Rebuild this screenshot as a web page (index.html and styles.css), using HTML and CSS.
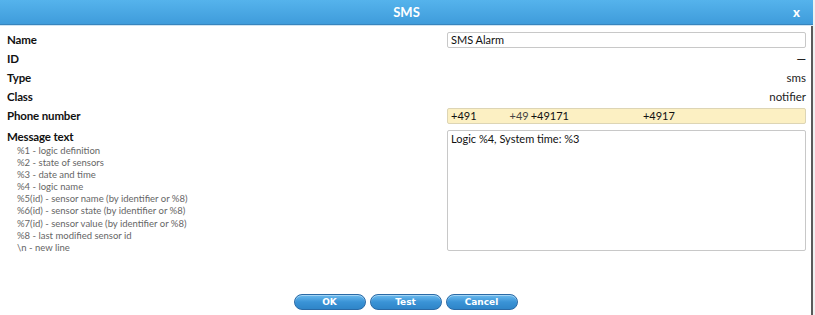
FILE: index.html
```html
<!DOCTYPE html>
<html>
<head>
<meta charset="utf-8">
<link rel="stylesheet" href="styles.css">
</head>
<body>
<div class="dialog">
  <div class="titlebar">
    <span class="title">SMS</span>
    <span class="close">x</span>
  </div>
  <div class="content">
    <div class="form">
      <div class="row">
        <div class="label">Name</div>
        <div class="field"><input class="input" type="text" value="SMS Alarm"></div>
      </div>
      <div class="row">
        <div class="label">ID</div>
        <div class="value dash">—</div>
      </div>
      <div class="row">
        <div class="label">Type</div>
        <div class="value">sms</div>
      </div>
      <div class="row">
        <div class="label">Class</div>
        <div class="value">notifier</div>
      </div>
      <div class="row">
        <div class="label">Phone number</div>
        <div class="field"><div class="input phone"><span>+491</span><span class="p2">+49</span><span class="p3">+49171</span><span class="p4">+4917</span></div></div>
      </div>
      <div class="row msg">
        <div class="left">
          <div class="label">Message text</div>
          <ul class="help">
            <li>%1 - logic definition</li>
            <li>%2 - state of sensors</li>
            <li>%3 - date and time</li>
            <li>%4 - logic name</li>
            <li>%5(id) - sensor name (by identifier or %8)</li>
            <li>%6(id) - sensor state (by identifier or %8)</li>
            <li>%7(id) - sensor value (by identifier or %8)</li>
            <li>%8 - last modified sensor id</li>
            <li>\n - new line</li>
          </ul>
        </div>
        <div class="field"><textarea class="textarea">Logic %4, System time: %3</textarea></div>
      </div>
    </div>
    <div class="buttons">
      <button class="btn">OK</button>
      <button class="btn">Test</button>
      <button class="btn">Cancel</button>
    </div>
  </div>
</div>
</body>
</html>
```
FILE: styles.css
```css
html, body {
  margin: 0;
  padding: 0;
  background: #f0f0f0;
}
body {
  width: 815px;
  height: 315px;
  overflow: hidden;
  font-family: Lato, "Open Sans", "DejaVu Sans", sans-serif;
  color: #111;
}
.dialog {
  width: 811px;
  height: 315px;
  background: #fff;
  border-right: 2px solid #5a5a5a;
  display: flex;
  flex-direction: column;
}
.titlebar {
  height: 24px;
  background: linear-gradient(#55b3ec, #3f9cdb);
  border-bottom: 1px solid #3784bd;
  box-shadow: 0 1px 0 #cfe4f2;
  display: flex;
  align-items: center;
  justify-content: center;
  position: relative;
  color: #fff;
  margin-right: -2px;
}
.title {
  font-weight: bold;
  font-size: 13px;
}
.close {
  position: absolute;
  right: 13px;
  top: 4px;
  font-weight: 900;
  font-size: 13px;
}
.content {
  flex: 1;
  display: flex;
  flex-direction: column;
  padding: 0 5px 0 7px;
}
.form {
  padding-top: 5px;
  display: flex;
  flex-direction: column;
}
.row {
  display: flex;
  justify-content: space-between;
  align-items: center;
  height: 19px;
}
.label {
  font-weight: bold;
  font-size: 11.5px;
  letter-spacing: -0.15px;
}
.field {
  width: 359px;
}
.value {
  font-size: 11.5px;
  color: #222;
}
.value.dash {
  font-size: 12px;
  font-weight: bold;
}
.input {
  box-sizing: border-box;
  width: 359px;
  height: 16px;
  border: 1px solid #c8c8c8;
  border-radius: 2px;
  padding: 0 3px;
  font-family: Lato, "Open Sans", "DejaVu Sans", sans-serif;
  font-size: 11px;
  color: #111;
  background: #fff;
  outline: none;
  display: block;
}
.phone {
  background: #fcf0c3;
  border-color: #ddd5b5;
  display: flex;
  align-items: center;
}
.phone .p2 { margin-left: 33px; color: #444; }
.phone .p3 { margin-left: 2px; }
.phone .p4 { margin-left: 74px; }
.row.msg {
  height: auto;
  align-items: flex-start;
  margin-top: 5px;
}
.msg .label {
  line-height: 13px;
}
.help {
  list-style: none;
  margin: 2px 0 0 10px;
  padding: 0;
  font-size: 9.5px;
  line-height: 12.1px;
  color: #666;
}
.textarea {
  box-sizing: border-box;
  width: 359px;
  height: 121px;
  border: 1px solid #c8c8c8;
  border-radius: 2px;
  padding: 1px 3px;
  font-family: Lato, "Open Sans", "DejaVu Sans", sans-serif;
  font-size: 11px;
  color: #111;
  resize: none;
  outline: none;
  display: block;
}
.buttons {
  margin-top: auto;
  margin-bottom: 5px;
  display: flex;
  justify-content: center;
  gap: 4px;
  padding-right: 2px;
}
.btn {
  width: 72px;
  height: 16px;
  border-radius: 8px;
  border: 1px solid #2a6aa6;
  background: linear-gradient(#6bbbef, #3a93d6 50%, #2f85c8);
  box-shadow: inset 0 1px 0 rgba(255,255,255,0.4);
  color: #fff;
  font-family: "DejaVu Sans", Verdana, sans-serif;
  font-weight: bold;
  font-size: 9px;
  padding: 0;
  line-height: 14px;
}
```
